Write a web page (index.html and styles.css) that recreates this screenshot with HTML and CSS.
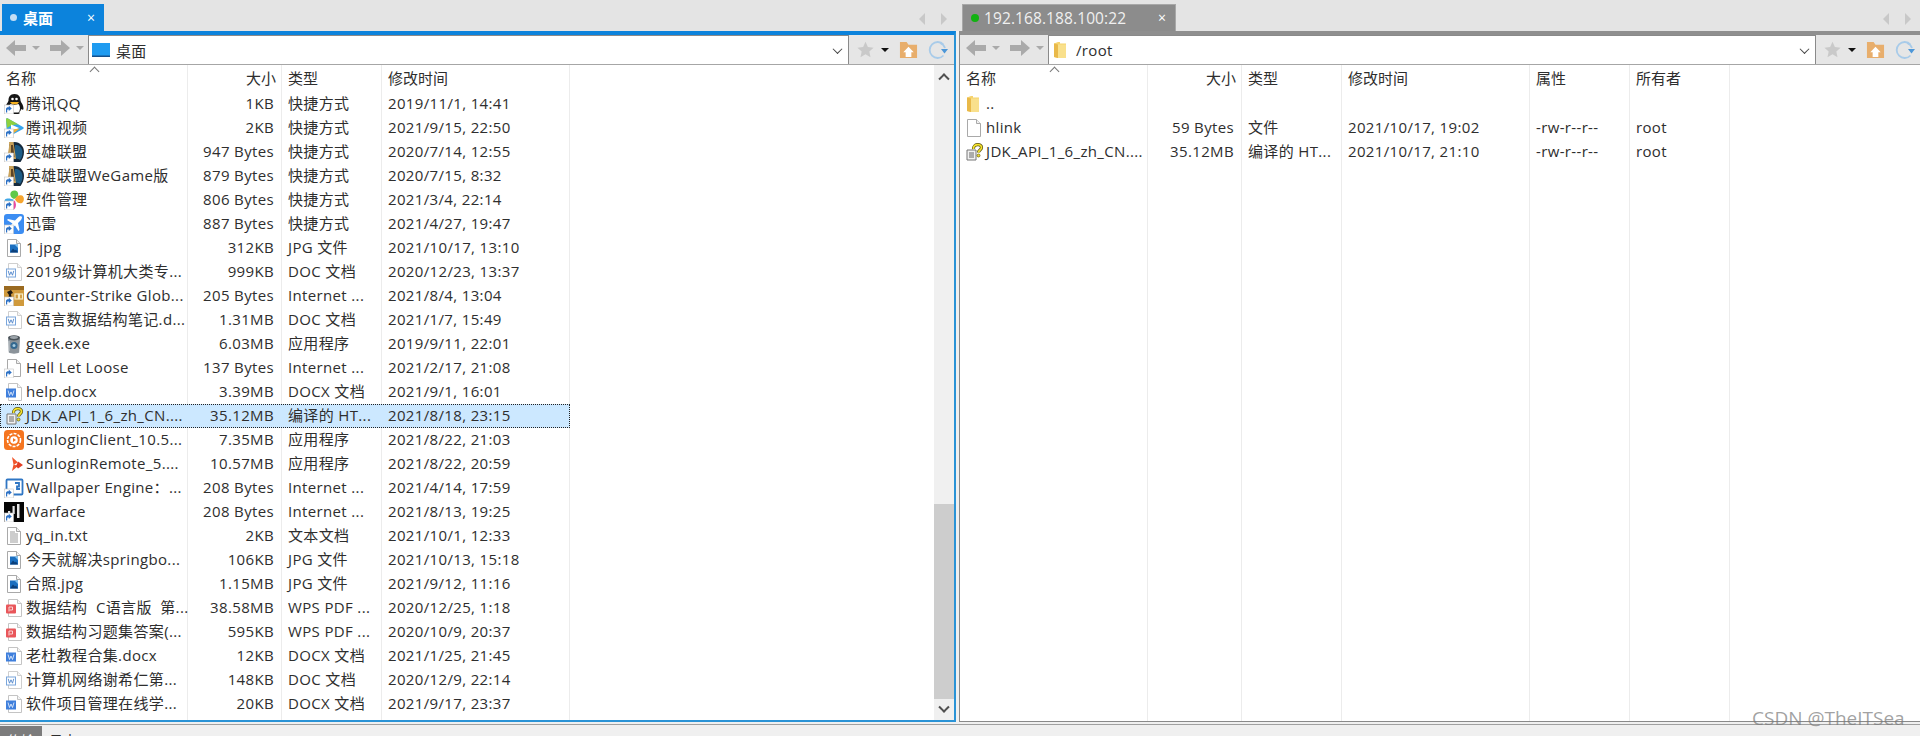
FILE: index.html
```html
<!DOCTYPE html>
<html lang="zh-CN">
<head>
<meta charset="utf-8">
<title>文件传输</title>
<link rel="stylesheet" href="styles.css">
</head>
<body>
<svg class="sprite" xmlns="http://www.w3.org/2000/svg">
  <symbol id="i-lnk" viewBox="0 0 20 20"><rect x=".5" y="11" width="9" height="9" fill="#fff" stroke="#c4c4c4" stroke-width=".6"/><path d="M2 18.600V15.200c0-1.400 1-2 2.200-2h.6V11.800l3 2.600-3 2.600v-1.600h-.6c-.8 0-1 .4-1 1v2.200z" fill="#2a6fc4"/></symbol>
  <symbol id="i-qq" viewBox="0 0 20 20"><path d="M10.500 0c4.500 0 6 3 6 6.500 0 1.500 3 4 3 8 0 1.500-1 1.500-2.500.5 0 1.500-1 2.500-2 3 1 .5 1 2-1 2H7c-2 0-2.500-1.500-1-2-1.500-.5-2-1.500-2-3-1 1-2.500 1-2.500-.5 0-4 3-6.500 3-8C4.500 3 6 0 10.500 0z" fill="#161616"/><path d="M6.500 10c2.500 1 5.500 1 8 0 2 2.500 2 6 0 8.500h-8c-2-2.500-2-6 0-8.500z" fill="#fff"/><path d="M6 8h9l-1.800 2.200H8z" fill="#f4b020"/><circle cx="8.500" cy="5" r="1.300" fill="#fff"/><circle cx="12.500" cy="5" r="1.300" fill="#fff"/></symbol>
  <symbol id="i-tv" viewBox="0 0 20 20"><path d="M2 1.500c0-1 1-1.500 2-1l15 8.500c1 .6 1 1.400 0 2L5 18.500c-1 .5-2 0-2-1z" fill="#37a5ee"/><path d="M2 1.500c0-1 1-1.500 2-1l11 6.200C11 6 7 7 3 10z" fill="#8ed13e"/><path d="M7 6.500l8 3.500-8 4z" fill="#fff"/><path d="M3 12l13-1.500L5 18.500c-1 .5-2 0-2-1z" fill="#f2b134"/></symbol>
  <symbol id="i-lol" viewBox="0 0 20 20"><path d="M5 2.500C7 1 9 0 10.500 0 16 0 20 4.500 20 10c0 4-1.500 7-3.500 10H6z" fill="#15293c"/><path d="M13 3c3.500 1 5.500 4 5.500 7.500 0 3-1 5.500-2.500 7.500-1-1-3-1.500-5-1.500V3z" fill="#1d5c86"/><path d="M5 0h4.500l2.500 17H5c-1-2-1.500-3-1-6 .5-3 1.500-7 1-11z" fill="#c9a25a"/><path d="M7 3h2l1.500 12H7z" fill="#5d4526"/></symbol>
  <symbol id="i-mgr" viewBox="0 0 20 20"><path d="M10 9C6 7.500 5.500 3.500 7.500 1.500c1.500-1.500 5-1.500 6 .5 1.800 3 0 6-3.500 7z" fill="#5fc94a"/><path d="M11 9.500c1-4 4.500-5 7-4 2 1 2.500 4 1 6.500-1.500 2.500-5.500 1.500-8-2.500z" fill="#f6a52e"/><path d="M10 10c-3.500-2-7.500-2-9-.5-1 2 0 5 3 6z" fill="#3fa7e8"/><path d="M10.500 10.500c2 3 2 7-.5 9-2.500 1-5-.5-6-3.500z" fill="#ea4aa0"/></symbol>
  <symbol id="i-xl" viewBox="0 0 20 20"><rect width="20" height="20" rx="3" fill="#3c8df2"/><path d="M17.500 2.500c-1-.6-2.500 0-3.500 1L11 6.500 4 5 3 6l5.500 3.500L6 12l-2-.5L3 12.500l3 1.500 1.500 3 1-1-.5-2 3-2.500 3.500 5.500 1-1-1.500-7 2.500-2.500c1-1 1.500-2.500 1.500-3.500z" fill="#fff"/></symbol>
  <symbol id="i-page" viewBox="0 0 20 20"><path d="M3.500 1.500h9l4 4v13h-13z" fill="#fff" stroke="#a9a9a9"/><path d="M12.500 1.500v4h4" fill="#f1f1f1" stroke="#a9a9a9"/></symbol>
  <symbol id="i-jpg" viewBox="0 0 20 20"><use href="#i-page"/><rect x="6" y="6.500" width="8" height="8" fill="#1b6fc0"/><path d="M6 14.500l3-4 2 2 1-1 2 3z" fill="#0c3f7a"/><path d="M10.500 6.500H14V10z" fill="#7fc0ee"/></symbol>
  <symbol id="i-doc" viewBox="0 0 20 20"><path d="M4.500 1.500h9l4 4v13h-13z" fill="#fff" stroke="#cfcfcf"/><path d="M13.500 1.500v4h4" fill="#f5f5f5" stroke="#cfcfcf"/><rect x="2.500" y="7" width="9" height="8" fill="#fff" stroke="#7aa6dc"/><path d="M4.200 8.800l1.300 4.400 1.500-3.400 1.500 3.400 1.300-4.400" fill="none" stroke="#4d85cc" stroke-width=".9"/></symbol>
  <symbol id="i-docx" viewBox="0 0 20 20"><path d="M4.500 1.500h9l4 4v13h-13z" fill="#fff" stroke="#c4c4c4"/><path d="M13.500 1.500v4h4" fill="#f5f5f5" stroke="#c4c4c4"/><rect x="2" y="6.500" width="10" height="9" fill="#3f7fdc"/><path d="M4 8.500l1.500 5 1.500-3.500 1.500 3.500 1.500-5" fill="none" stroke="#dfeaf9" stroke-width=".9"/></symbol>
  <symbol id="i-pdf" viewBox="0 0 20 20"><path d="M4.500 1.500h9l4 4v13h-13z" fill="#fff" stroke="#c4c4c4"/><path d="M13.500 1.500v4h4" fill="#f5f5f5" stroke="#c4c4c4"/><rect x="2" y="6.500" width="10" height="9" rx="1" fill="#e9565a"/><path d="M5 13.500V9h3.500v3H5.500" fill="none" stroke="#f7d4d4"/></symbol>
  <symbol id="i-cs" viewBox="0 0 20 20"><rect width="20" height="20" fill="#d09a3c"/><rect width="20" height="4" fill="#9a6a20"/><path d="M3 6l4-2 2 3-2 1 1 6H4l1-5z" fill="#1e1a14"/><rect x="11" y="8" width="3.500" height="5" fill="none" stroke="#f6ebc4" stroke-width="1.200"/><rect x="15.500" y="8" width="3" height="5" fill="none" stroke="#f6ebc4" stroke-width="1.200"/></symbol>
  <symbol id="i-exe" viewBox="0 0 20 20"><path d="M4 4.500h12l-.8 14c-2 1.500-8.400 1.500-10.400 0z" fill="#8b939a"/><ellipse cx="10" cy="3.800" rx="6" ry="2.600" fill="#4a5258"/><ellipse cx="10" cy="3.500" rx="4" ry="1.400" fill="#9ca4aa"/><circle cx="10" cy="11.500" r="3.500" fill="#34688f"/><circle cx="10" cy="11.500" r="1.500" fill="#a8cce0"/><path d="M5 7v10" stroke="#c8ced2"/></symbol>
  <symbol id="i-chm" viewBox="0 0 20 20"><path d="M3 8h9v10H3z" fill="#f1f1f1" stroke="#777"/><path d="M5 11h5M5 13h5M5 15h5" stroke="#666"/><path d="M9.500 7c-.5-5 8-6 8-1.500 0 2.500-3 2.500-3 5" fill="none" stroke="#5b5312" stroke-width="3.200"/><path d="M9.500 7c-.5-5 8-6 8-1.500 0 2.500-3 2.500-3 5" fill="none" stroke="#f5e32c" stroke-width="1.700"/><circle cx="14.500" cy="13.500" r="1.500" fill="#f5e32c" stroke="#5b5312" stroke-width=".7"/></symbol>
  <symbol id="i-sun" viewBox="0 0 20 20"><rect width="20" height="20" rx="3.500" fill="#f5751f"/><circle cx="10" cy="10" r="6.500" fill="none" stroke="#fff" stroke-width="1.600" stroke-dasharray="3 1.200"/><circle cx="10" cy="10" r="3.800" fill="#fff"/><path d="M9 8l3 2-3 2z" fill="#f5751f"/></symbol>
  <symbol id="i-rem" viewBox="0 0 20 20"><path d="M8 3l6 5.500-4 2 4 1.500-6 5 1.500-6.500z" fill="#f0562c"/><path d="M14 7.500l5 3.500-5 3.500-2-2.500 1-2z" fill="#e23e24"/></symbol>
  <symbol id="i-wall" viewBox="0 0 20 20"><rect x="2.500" y="1.500" width="16" height="15" rx="1" fill="#fff" stroke="#2f76c4" stroke-width="1.800"/><path d="M11 5h4v3.500h-2V11h3" fill="none" stroke="#2f76c4" stroke-width="1.800"/></symbol>
  <symbol id="i-war" viewBox="0 0 20 20"><rect width="20" height="20" fill="#050505"/><path d="M4 9h2.200v6H4zM8.500 4h2.200v8H8.500zM13 2h2.500v14H13z" fill="#e8e8e8"/></symbol>
  <symbol id="i-txt" viewBox="0 0 20 20"><use href="#i-page"/><path d="M6 6h5M6 8h8M6 10h8M6 12h8M6 14h8M6 16h8" stroke="#9b9b9b"/></symbol>
  <symbol id="i-fold" viewBox="0 0 20 20"><path d="M3 3.500L7 2h2v1.500h6V18H7l-4-1z" fill="#f6d36d"/><path d="M7 4.500h8V18H7z" fill="#f9e08c"/><path d="M3 3.500l4 1V18l-4-1z" fill="#e9b949"/></symbol>
  <symbol id="i-desk" viewBox="0 0 20 20"><rect x="1" y="3" width="18" height="14" fill="#1f9bf0"/><rect x="1" y="15.500" width="18" height="1.500" fill="#14508c"/></symbol>
  <symbol id="i-back" viewBox="0 0 20 20"><path d="M9 2L0 10l9 8v-5h11V7H9z" fill="#aaa"/></symbol>
  <symbol id="i-fwd" viewBox="0 0 20 20"><path d="M11 2l9 8-9 8v-5H0V7h11z" fill="#aaa"/></symbol>
  <symbol id="i-star" viewBox="0 0 20 20"><path d="M10 1l2.800 6 6.700.8-5 4.500 1.400 6.700-5.900-3.400L4.100 19l1.400-6.700-5-4.500L7.200 7z" fill="#c9c9c9"/></symbol>
  <symbol id="i-home" viewBox="0 0 20 20"><path d="M1 2h7l2 3h9v14H1z" fill="#e8ae6c"/><path d="M10 7l5.500 6H13v5H7v-5H4.500z" fill="#fff"/></symbol>
  <symbol id="i-ref" viewBox="0 0 20 20"><path d="M15.500 4.500A8 8 0 1 0 15.500 15.500" fill="none" stroke="#a8cbe9" stroke-width="1.800"/><path d="M12 3a8 8 0 0 1 5 5" fill="none" stroke="#a8cbe9" stroke-width="1.800"/><path d="M13 9h7l-3.500 4.500z" fill="#4d97d8"/></symbol>
</svg>

<div class="app">
  <div class="panes">
    <section class="pane pane-local">
      <div class="strip">
        <div class="tab tab-on"><span class="dot"></span><span class="tab-name">桌面</span><span class="tab-x">×</span></div>
        <div class="strip-nav"><span class="tri tri-l"></span><span class="tri tri-r"></span></div>
      </div>
      <div class="frame frame-blue">
        <div class="bar">
          <div class="nav">
            <svg class="nav-ico"><use href="#i-back"/></svg><span class="caret"></span>
            <svg class="nav-ico"><use href="#i-fwd"/></svg><span class="caret"></span>
          </div>
          <div class="addr"><svg class="addr-ico"><use href="#i-desk"/></svg><span class="addr-text">桌面</span><span class="chev"></span></div>
          <div class="tools">
            <svg class="tool-star"><use href="#i-star"/></svg><span class="caret caret-dark"></span>
            <svg class="tool-home"><use href="#i-home"/></svg>
            <svg class="tool-ref"><use href="#i-ref"/></svg>
          </div>
        </div>
        <div class="content">
          <div class="list">
            <div class="row head">
              <div class="cell c-name"><span class="sort"></span>名称</div>
              <div class="cell c-size">大小</div>
              <div class="cell c-type">类型</div>
              <div class="cell c-time">修改时间</div>
            </div>
            <div class="row"><div class="cell c-name"><svg class="ico"><use href="#i-qq"/><use href="#i-lnk"/></svg>腾讯QQ</div><div class="cell c-size">1KB</div><div class="cell c-type">快捷方式</div><div class="cell c-time">2019/11/1, 14:41</div></div>
            <div class="row"><div class="cell c-name"><svg class="ico"><use href="#i-tv"/><use href="#i-lnk"/></svg>腾讯视频</div><div class="cell c-size">2KB</div><div class="cell c-type">快捷方式</div><div class="cell c-time">2021/9/15, 22:50</div></div>
            <div class="row"><div class="cell c-name"><svg class="ico"><use href="#i-lol"/><use href="#i-lnk"/></svg>英雄联盟</div><div class="cell c-size">947 Bytes</div><div class="cell c-type">快捷方式</div><div class="cell c-time">2020/7/14, 12:55</div></div>
            <div class="row"><div class="cell c-name"><svg class="ico"><use href="#i-lol"/><use href="#i-lnk"/></svg>英雄联盟WeGame版</div><div class="cell c-size">879 Bytes</div><div class="cell c-type">快捷方式</div><div class="cell c-time">2020/7/15, 8:32</div></div>
            <div class="row"><div class="cell c-name"><svg class="ico"><use href="#i-mgr"/><use href="#i-lnk"/></svg>软件管理</div><div class="cell c-size">806 Bytes</div><div class="cell c-type">快捷方式</div><div class="cell c-time">2021/3/4, 22:14</div></div>
            <div class="row"><div class="cell c-name"><svg class="ico"><use href="#i-xl"/><use href="#i-lnk"/></svg>迅雷</div><div class="cell c-size">887 Bytes</div><div class="cell c-type">快捷方式</div><div class="cell c-time">2021/4/27, 19:47</div></div>
            <div class="row"><div class="cell c-name"><svg class="ico"><use href="#i-jpg"/></svg>1.jpg</div><div class="cell c-size">312KB</div><div class="cell c-type">JPG 文件</div><div class="cell c-time">2021/10/17, 13:10</div></div>
            <div class="row"><div class="cell c-name"><svg class="ico"><use href="#i-doc"/></svg>2019级计算机大类专...</div><div class="cell c-size">999KB</div><div class="cell c-type">DOC 文档</div><div class="cell c-time">2020/12/23, 13:37</div></div>
            <div class="row"><div class="cell c-name"><svg class="ico"><use href="#i-cs"/><use href="#i-lnk"/></svg>Counter-Strike Glob...</div><div class="cell c-size">205 Bytes</div><div class="cell c-type">Internet ...</div><div class="cell c-time">2021/8/4, 13:04</div></div>
            <div class="row"><div class="cell c-name"><svg class="ico"><use href="#i-doc"/></svg>C语言数据结构笔记.d...</div><div class="cell c-size">1.31MB</div><div class="cell c-type">DOC 文档</div><div class="cell c-time">2021/1/7, 15:49</div></div>
            <div class="row"><div class="cell c-name"><svg class="ico"><use href="#i-exe"/></svg>geek.exe</div><div class="cell c-size">6.03MB</div><div class="cell c-type">应用程序</div><div class="cell c-time">2019/9/11, 22:01</div></div>
            <div class="row"><div class="cell c-name"><svg class="ico"><use href="#i-page"/><use href="#i-lnk"/></svg>Hell Let Loose</div><div class="cell c-size">137 Bytes</div><div class="cell c-type">Internet ...</div><div class="cell c-time">2021/2/17, 21:08</div></div>
            <div class="row"><div class="cell c-name"><svg class="ico"><use href="#i-docx"/></svg>help.docx</div><div class="cell c-size">3.39MB</div><div class="cell c-type">DOCX 文档</div><div class="cell c-time">2021/9/1, 16:01</div></div>
            <div class="row sel"><div class="cell c-name"><svg class="ico"><use href="#i-chm"/></svg>JDK_API_1_6_zh_CN....</div><div class="cell c-size">35.12MB</div><div class="cell c-type">编译的 HT...</div><div class="cell c-time">2021/8/18, 23:15</div></div>
            <div class="row"><div class="cell c-name"><svg class="ico"><use href="#i-sun"/></svg>SunloginClient_10.5...</div><div class="cell c-size">7.35MB</div><div class="cell c-type">应用程序</div><div class="cell c-time">2021/8/22, 21:03</div></div>
            <div class="row"><div class="cell c-name"><svg class="ico"><use href="#i-rem"/></svg>SunloginRemote_5....</div><div class="cell c-size">10.57MB</div><div class="cell c-type">应用程序</div><div class="cell c-time">2021/8/22, 20:59</div></div>
            <div class="row"><div class="cell c-name"><svg class="ico"><use href="#i-wall"/><use href="#i-lnk"/></svg>Wallpaper Engine：...</div><div class="cell c-size">208 Bytes</div><div class="cell c-type">Internet ...</div><div class="cell c-time">2021/4/14, 17:59</div></div>
            <div class="row"><div class="cell c-name"><svg class="ico"><use href="#i-war"/><use href="#i-lnk"/></svg>Warface</div><div class="cell c-size">208 Bytes</div><div class="cell c-type">Internet ...</div><div class="cell c-time">2021/8/13, 19:25</div></div>
            <div class="row"><div class="cell c-name"><svg class="ico"><use href="#i-txt"/></svg>yq_in.txt</div><div class="cell c-size">2KB</div><div class="cell c-type">文本文档</div><div class="cell c-time">2021/10/1, 12:33</div></div>
            <div class="row"><div class="cell c-name"><svg class="ico"><use href="#i-jpg"/></svg>今天就解决springbo...</div><div class="cell c-size">106KB</div><div class="cell c-type">JPG 文件</div><div class="cell c-time">2021/10/13, 15:18</div></div>
            <div class="row"><div class="cell c-name"><svg class="ico"><use href="#i-jpg"/></svg>合照.jpg</div><div class="cell c-size">1.15MB</div><div class="cell c-type">JPG 文件</div><div class="cell c-time">2021/9/12, 11:16</div></div>
            <div class="row"><div class="cell c-name"><svg class="ico"><use href="#i-pdf"/></svg>数据结构&nbsp;&nbsp;C语言版&nbsp;&nbsp;第...</div><div class="cell c-size">38.58MB</div><div class="cell c-type">WPS PDF ...</div><div class="cell c-time">2020/12/25, 1:18</div></div>
            <div class="row"><div class="cell c-name"><svg class="ico"><use href="#i-pdf"/></svg>数据结构习题集答案(...</div><div class="cell c-size">595KB</div><div class="cell c-type">WPS PDF ...</div><div class="cell c-time">2020/10/9, 20:37</div></div>
            <div class="row"><div class="cell c-name"><svg class="ico"><use href="#i-docx"/></svg>老杜教程合集.docx</div><div class="cell c-size">12KB</div><div class="cell c-type">DOCX 文档</div><div class="cell c-time">2021/1/25, 21:45</div></div>
            <div class="row"><div class="cell c-name"><svg class="ico"><use href="#i-doc"/></svg>计算机网络谢希仁第...</div><div class="cell c-size">148KB</div><div class="cell c-type">DOC 文档</div><div class="cell c-time">2020/12/9, 22:14</div></div>
            <div class="row"><div class="cell c-name"><svg class="ico"><use href="#i-docx"/></svg>软件项目管理在线学...</div><div class="cell c-size">20KB</div><div class="cell c-type">DOCX 文档</div><div class="cell c-time">2021/9/17, 23:37</div></div>
            <div class="row filler"><div class="cell c-name"></div><div class="cell c-size"></div><div class="cell c-type"></div><div class="cell c-time"></div></div>
          </div>
          <div class="scrollbar">
            <div class="sb-btn"><span class="sb-up"></span></div>
            <div class="sb-track"><div class="sb-thumb"></div></div>
            <div class="sb-btn"><span class="sb-down"></span></div>
          </div>
        </div>
      </div>
    </section>

    <section class="pane pane-remote">
      <div class="strip">
        <div class="tab tab-off"><span class="dot dot-green"></span><span class="tab-name">192.168.188.100:22</span><span class="tab-x">×</span></div>
        <div class="strip-nav"><span class="tri tri-l"></span><span class="tri tri-r"></span></div>
      </div>
      <div class="frame frame-gray">
        <div class="bar">
          <div class="nav">
            <svg class="nav-ico"><use href="#i-back"/></svg><span class="caret"></span>
            <svg class="nav-ico"><use href="#i-fwd"/></svg><span class="caret"></span>
          </div>
          <div class="addr"><svg class="addr-ico"><use href="#i-fold"/></svg><span class="addr-text">/root</span><span class="chev"></span></div>
          <div class="tools">
            <svg class="tool-star"><use href="#i-star"/></svg><span class="caret caret-dark"></span>
            <svg class="tool-home"><use href="#i-home"/></svg>
            <svg class="tool-ref"><use href="#i-ref"/></svg>
          </div>
        </div>
        <div class="content">
          <div class="list">
            <div class="row head">
              <div class="cell c-name"><span class="sort"></span>名称</div>
              <div class="cell c-size">大小</div>
              <div class="cell c-type">类型</div>
              <div class="cell c-time">修改时间</div>
              <div class="cell c-attr">属性</div>
              <div class="cell c-own">所有者</div>
            </div>
            <div class="row"><div class="cell c-name"><svg class="ico"><use href="#i-fold"/></svg>..</div><div class="cell c-size"></div><div class="cell c-type"></div><div class="cell c-time"></div><div class="cell c-attr"></div><div class="cell c-own"></div></div>
            <div class="row"><div class="cell c-name"><svg class="ico"><use href="#i-page"/></svg>hlink</div><div class="cell c-size">59 Bytes</div><div class="cell c-type">文件</div><div class="cell c-time">2021/10/17, 19:02</div><div class="cell c-attr">-rw-r--r--</div><div class="cell c-own">root</div></div>
            <div class="row"><div class="cell c-name"><svg class="ico"><use href="#i-chm"/></svg>JDK_API_1_6_zh_CN....</div><div class="cell c-size">35.12MB</div><div class="cell c-type">编译的 HT...</div><div class="cell c-time">2021/10/17, 21:10</div><div class="cell c-attr">-rw-r--r--</div><div class="cell c-own">root</div></div>
            <div class="row filler"><div class="cell c-name"></div><div class="cell c-size"></div><div class="cell c-type"></div><div class="cell c-time"></div><div class="cell c-attr"></div><div class="cell c-own"></div></div>
          </div>
        </div>
      </div>
    </section>
  </div>
  <div class="logbar">
    <div class="log-tab log-on">传输</div>
    <div class="log-tab">日志</div>
  </div>
  <div class="mark">CSDN @TheITSea</div>
</div>
</body>
</html>
```
FILE: styles.css
```css
* { box-sizing: border-box; }
html, body { margin: 0; padding: 0; height: 100%; overflow: hidden; }
body { font-family: "Open Sans", "Noto Sans CJK SC", sans-serif; font-size: 15px; color: #2e2e2e; background: #f0f0f0; }
.sprite { display: none; }
.app { position: relative; width: 1920px; height: 736px; display: flex; flex-direction: column; overflow: hidden; }
.panes { height: 722px; display: flex; gap: 3px; background: #f0f0f0; }
.pane { display: flex; flex-direction: column; min-width: 0; }
.pane-local { width: 956px; }
.pane-remote { flex: 1; }

.strip { height: 31px; flex: none; background: #e4e4e4; display: flex; align-items: flex-end; padding-left: 2px; box-shadow: 3px 0 0 #e4e4e4; }
.pane-remote .strip { padding-left: 3px; box-shadow: none; }
.tab { height: 27px; display: flex; align-items: center; position: relative; color: #fff; white-space: nowrap; }
.tab-on { width: 102px; background: #0c83dc; padding-left: 8px; }
.tab-off { width: 214px; background: #8c8c8c; padding-left: 8px; border: 1px solid #a8a8a8; border-bottom: 0; color: #f0f0f0; }
.tab-on .tab-name { margin-left: 6px; font-weight: 600; }
.tab-off .tab-name { margin-left: 5px; font-size: 15.500px; letter-spacing: .1px; }
.dot { width: 7px; height: 7px; border-radius: 50%; background: #c4def4; flex: none; }
.dot-green { background: #12b212; width: 8px; height: 8px; }
.tab-x { margin-left: auto; margin-right: 9px; font-size: 14px; line-height: 14px; color: #fff; }
.strip-nav { margin-left: auto; margin-right: 9px; margin-bottom: 6px; height: 12px; display: flex; gap: 16px; }
.tri { width: 6px; height: 12px; border-style: solid; border-color: transparent; border-width: 6px 0; }
.tri-l { border-right: 6px solid #c8c8c8; }
.tri-r { border-left: 6px solid #c8c8c8; }

.frame { flex: 1; min-height: 0; display: flex; flex-direction: column; background: #fff; }
.frame-blue { border-top: 4px solid #0c83dc; border-right: 2px solid #2a93d6; border-bottom: 2px solid #2a93d6; }
.frame-gray { border-top: 4px solid #8f8f8f; border-left: 1px solid #8a8a8a; border-bottom: 1px solid #8a8a8a; }

.bar { height: 30px; flex: none; display: flex; background: #e6e6e6; border-bottom: 1px solid #a6a6a6; }
.nav { width: 88px; flex: none; display: flex; align-items: center; padding: 0 0 4px 6px; }
.nav-ico { width: 20px; height: 20px; flex: none; }
.caret { width: 0; height: 0; border-style: solid; border-color: #aaa transparent transparent; border-width: 4px 4px 0; margin: 0 12px 0 6px; flex: none; }
.nav .caret + .nav-ico { margin-left: -2px; }
.addr { flex: 1; min-width: 0; display: flex; align-items: center; background: #fff; border-top: 1px solid #8a8a8a; border-left: 1px solid #8a8a8a; border-right: 1px solid #8a8a8a; padding-left: 2px; }
.addr-ico { width: 20px; height: 20px; flex: none; }
.addr-text { margin-left: 5px; letter-spacing: .35px; }
.chev { margin-left: auto; margin-right: 7px; width: 7px; height: 7px; border-right: 1px solid #444; border-bottom: 1px solid #444; transform: rotate(45deg) translate(-1px, -1px); }
.tools { width: 105px; flex: none; display: flex; align-items: center; padding-left: 8px; }
.pane-remote .tools { width: 104px; }
.tool-star { width: 17px; height: 17px; flex: none; }
.caret-dark { border-color: #111 transparent transparent; margin: 0 0 0 7px; }
.tool-home { width: 19px; height: 19px; margin-left: 10px; flex: none; }
.tool-ref { width: 20px; height: 20px; margin-left: 10px; flex: none; }

.content { flex: 1; min-height: 0; display: flex; }
.list { flex: 1; min-width: 0; display: flex; flex-direction: column; }
.row { height: 24px; flex: none; display: flex; line-height: 23px; white-space: nowrap; letter-spacing: .35px; }
.head { height: 27px; line-height: 26px; letter-spacing: 0; }
.filler { flex: 1; height: auto; }
.cell { flex: none; border-right: 1px solid #ececec; overflow: hidden; display: flex; align-items: flex-start; }
.c-name { width: 188px; padding-left: 4px; position: relative; overflow: visible; }
.head .c-name { padding-left: 6px; }
.c-size { width: 94px; justify-content: flex-end; padding-right: 7px; }
.head .c-size { padding-right: 5px; }
.c-type { width: 100px; padding-left: 6px; }
.c-time { width: 188px; padding-left: 6px; }
.c-attr { width: 100px; padding-left: 6px; }
.c-own { width: 100px; padding-left: 6px; }
.ico { width: 20px; height: 20px; margin: 2px 2px 0 0; flex: none; }
.sel { background: #cce8ff; outline: 1px dotted #222; outline-offset: -1px; width: 570px; }
.sel .cell { border-color: transparent; }
.sort { position: absolute; left: 91px; top: 3px; width: 7px; height: 7px; border-left: 1px solid #777; border-top: 1px solid #777; transform: rotate(45deg); }

.scrollbar { width: 20px; flex: none; background: #f0f0f0; display: flex; flex-direction: column; }
.sb-btn { height: 21px; flex: none; display: flex; align-items: center; justify-content: center; }
.sb-up, .sb-down { width: 8px; height: 8px; border-left: 2px solid #505050; border-top: 2px solid #505050; }
.sb-up { transform: rotate(45deg) translate(2px, 2px); }
.sb-down { transform: rotate(225deg) translate(2px, 2px); }
.sb-track { flex: 1; min-height: 0; display: flex; flex-direction: column; justify-content: flex-end; }
.sb-thumb { height: 195px; background: #cdcdcd; }

.logbar { flex: 1; min-height: 0; display: flex; align-items: flex-start; overflow: hidden; background: #f0f0f0; border-top: 1px solid #a0a0a0; margin-top: 2px; padding-top: 1px; font-size: 14px; }
.log-tab { width: 42px; padding: 5px 0 0; text-align: center; line-height: 20px; height: 30px; }
.log-on { background: #7c7c7c; color: #fff; }
.mark { position: absolute; left: 1752px; top: 705px; font-size: 19px; line-height: 26px; color: rgba(120, 120, 120, .7); white-space: nowrap; }
```
